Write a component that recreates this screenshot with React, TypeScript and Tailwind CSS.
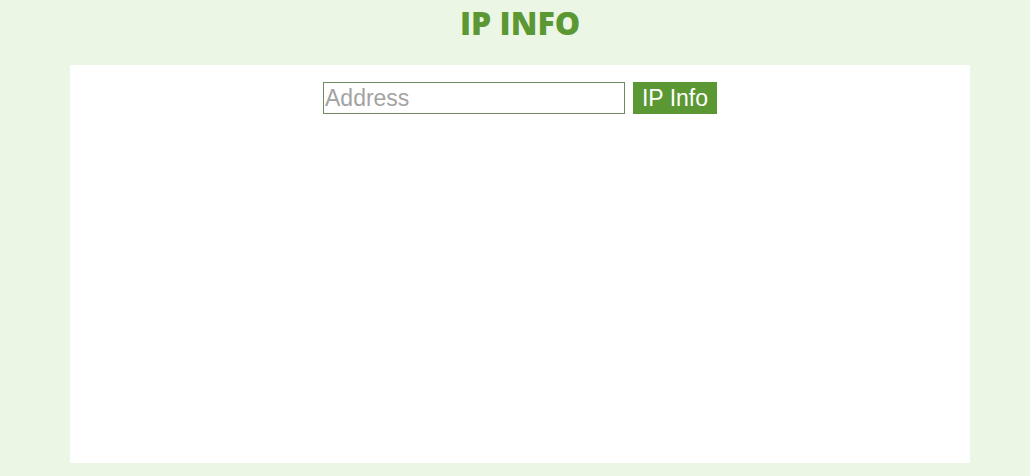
export default function App() {
  return (
    <div className="min-h-[476px] bg-[#ebf6e5] flex flex-col items-center pl-[10px]">
      <h1 className="mt-[3px] h-[62px] text-[32px] leading-[40px] font-extrabold text-[#5b9733] font-['Open_Sans',sans-serif]">
        IP INFO
      </h1>
      <div className="w-[900px] h-[398px] bg-white flex justify-center pt-[17px]">
        <form className="flex gap-2 h-[32px]" onSubmit={(e) => e.preventDefault()}>
          <input
            type="text"
            placeholder="Address"
            className="w-[302px] h-[32px] border border-[#6e8b60] px-px text-[23px] font-['Liberation_Sans',sans-serif] placeholder:text-[#a3a3a3] outline-none"
          />
          <button
            type="submit"
            className="w-[84px] h-[32px] bg-[#5b9733] text-white text-[23px] font-['Liberation_Sans',sans-serif] leading-none"
          >
            IP Info
          </button>
        </form>
      </div>
    </div>
  );
}
